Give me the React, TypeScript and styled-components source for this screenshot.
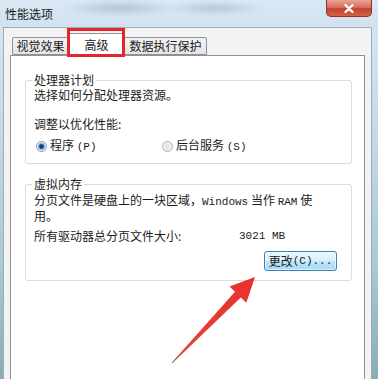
import React from 'react';
import styled, { createGlobalStyle } from 'styled-components';

const GlobalStyle = createGlobalStyle`
  html, body { margin: 0; padding: 0; background: #fff; }
  body { font-family: "Noto Sans CJK SC", "Noto Sans", sans-serif; }
`;

const Page = styled.div`
  position: relative;
  width: 378px;
  height: 379px;
  overflow: hidden;
  display: flex;
  flex-direction: column;
  background: linear-gradient(180deg, #d8e7f4 0%, #c7dbee 30%, #a9c8d8 70%, #86afb2 100%);
  font-family: "Noto Sans CJK SC", sans-serif;
  font-size: 12px;
  color: #1c1c1c;
`;

const TitleBar = styled.div`
  height: 27px;
  flex: none;
  display: flex;
  align-items: flex-start;
  background:
    radial-gradient(ellipse 55px 9px at 120px 8px, rgba(120, 135, 150, 0.35), transparent),
    radial-gradient(ellipse 50px 8px at 215px 8px, rgba(120, 135, 150, 0.3), transparent),
    linear-gradient(180deg, #dbe8f5, #d0e1f1);
`;

const Title = styled.div`
  margin: 6px 0 0 5px;
  font-size: 12px;
  line-height: 16px;
  color: #1b1b1b;
`;

const CloseButton = styled.div`
  margin-left: auto;
  margin-right: 6px;
  width: 46px;
  height: 17px;
  box-sizing: border-box;
  border: 1px solid #8f3225;
  border-top: none;
  border-radius: 0 0 5px 5px;
  background: linear-gradient(180deg, #e9a596 0%, #d8705d 45%, #c4432d 55%, #d0624c 100%);
  display: flex;
  align-items: center;
  justify-content: center;
`;

const Client = styled.div`
  flex: 1;
  margin: 0 6px 0 3px;
  border: 1px solid #a2acb6;
  border-bottom: none;
  background: #f3f3f3;
  display: flex;
  flex-direction: column;
  padding: 0 6px 0 6px;
`;

const TabStrip = styled.div`
  height: 28px;
  flex: none;
  display: flex;
  align-items: flex-end;
  padding-left: 2px;
  margin-bottom: -1px;
  position: relative;
  z-index: 1;
`;

const Tab = styled.div<{ $active?: boolean; $w: number }>`
  box-sizing: border-box;
  width: ${(p) => p.$w}px;
  height: ${(p) => (p.$active ? 23 : 18)}px;
  margin-bottom: ${(p) => (p.$active ? 0 : 1)}px;
  margin-left: -1px;
  &:first-child { margin-left: 0; }
  border: 1px solid #8e9199;
  border-bottom: ${(p) => (p.$active ? 'none' : '1px solid #8e9199')};
  border-radius: 2px 2px 0 0;
  background: ${(p) => (p.$active ? '#ffffff' : 'linear-gradient(180deg, #f4f4f4, #e4e4e4)')};
  display: flex;
  align-items: ${(p) => (p.$active ? 'flex-start' : 'center')};
  justify-content: center;
  padding-top: ${(p) => (p.$active ? 3 : 0)}px;
  font-size: 12px;
  line-height: 16px;
  color: #1a1a1a;
`;

const Panel = styled.div`
  flex: 1;
  background: #ffffff;
  border: 1px solid #8e9199;
  border-bottom: none;
  padding: 17px 12px 0 14px;
  display: flex;
  flex-direction: column;
`;

const Group = styled.fieldset<{ $gap?: number }>`
  margin: ${(p) => p.$gap ?? 0}px 0 0 0;
  padding: 0 8px 0 8px;
  border: 1px solid #d6dee4;
  border-radius: 3px;
  min-width: 0;
  display: flex;
  flex-direction: column;
`;

const Legend = styled.legend`
  padding: 0 2px;
  margin-left: -2px;
  font-size: 12px;
  line-height: 14px;
  color: #1c1c1c;
`;

const Line = styled.div<{ $top?: number; $lh?: number }>`
  margin-top: ${(p) => p.$top ?? 0}px;
  font-size: 12px;
  line-height: ${(p) => p.$lh ?? 14}px;
  white-space: nowrap;
`;

const Latin = styled.span`
  font-family: "Liberation Mono", "DejaVu Sans Mono", monospace;
  font-size: 11px;
`;

const RadioRow = styled.div`
  margin-top: 7px;
  margin-bottom: 11px;
  margin-left: 2px;
  display: grid;
  grid-template-columns: 126px auto;
  height: 14px;
  align-items: center;
`;

const RadioOption = styled.div`
  display: flex;
  align-items: center;
  gap: 3px;
  line-height: 14px;
`;

const RadioDot = styled.span<{ $checked?: boolean }>`
  width: 11px;
  height: 11px;
  box-sizing: border-box;
  border-radius: 50%;
  border: 1px solid ${(p) => (p.$checked ? '#7d9cb8' : '#a7b0b8')};
  background: ${(p) =>
    p.$checked
      ? 'radial-gradient(circle, #123f70 0 1.5px, #3f7fc0 2.5px, #bcd8f0 3.5px, #f2f6f9 4.5px)'
      : 'radial-gradient(circle, #e2e6ea 0 2px, #f4f5f6 4.5px)'};
  flex: none;
`;

const SizeRow = styled.div`
  margin-top: 7px;
  display: grid;
  grid-template-columns: 205px auto;
  line-height: 14px;
  white-space: nowrap;
`;

const ButtonRow = styled.div`
  display: flex;
  justify-content: flex-end;
  margin-top: 8px;
  margin-bottom: 9px;
  padding-right: 6px;
`;

const Button = styled.div`
  width: 73px;
  height: 20px;
  box-sizing: border-box;
  border: 1px solid #3c7fb1;
  border-radius: 3px;
  background: linear-gradient(180deg, #eaf6fd 0%, #d9f0fc 48%, #bee6fd 52%, #a7d9f5 100%);
  box-shadow: inset 0 0 0 1px rgba(255, 255, 255, 0.6);
  display: flex;
  align-items: center;
  justify-content: center;
  font-size: 12px;
  line-height: 14px;
  color: #1a1a1a;
`;

const Highlight = styled.div`
  position: absolute;
  z-index: 5;
  left: 67px;
  top: 28px;
  width: 58px;
  height: 29px;
  box-sizing: border-box;
  border: 3px solid #e2272b;
  pointer-events: none;
`;

const ArrowLayer = styled.svg`
  position: absolute;
  z-index: 5;
  left: 0;
  top: 0;
  width: 378px;
  height: 379px;
  pointer-events: none;
`;

export default function App() {
  return (
    <>
      <GlobalStyle />
      <Page>
        <TitleBar>
          <Title>性能选项</Title>
          <CloseButton>
            <svg width="10" height="9" viewBox="0 0 10 9">
              <path d="M1.5 1 L8.5 8 M8.5 1 L1.5 8" stroke="#ffffff" strokeWidth="2.2" strokeLinecap="round" />
            </svg>
          </CloseButton>
        </TitleBar>
        <Client>
          <TabStrip>
            <Tab $w={57}>视觉效果</Tab>
            <Tab $w={57} $active>高级</Tab>
            <Tab $w={83}>数据执行保护</Tab>
          </TabStrip>
          <Panel>
            <Group>
              <Legend>处理器计划</Legend>
              <Line $top={1}>选择如何分配处理器资源。</Line>
              <Line $top={15}>调整以优化性能:</Line>
              <RadioRow>
                <RadioOption>
                  <RadioDot $checked />
                  <span>程序 <Latin>(P)</Latin></span>
                </RadioOption>
                <RadioOption>
                  <RadioDot />
                  <span>后台服务 <Latin>(S)</Latin></span>
                </RadioOption>
              </RadioRow>
            </Group>
            <Group $gap={13}>
              <Legend>虚拟内存</Legend>
              <Line $top={2} $lh={13}>
                分页文件是硬盘上的一块区域，<Latin>Windows</Latin> 当作 <Latin>RAM</Latin> 使
              </Line>
              <Line $lh={13}>用。</Line>
              <SizeRow>
                <span>所有驱动器总分页文件大小:</span>
                <Latin>3021 MB</Latin>
              </SizeRow>
              <ButtonRow>
                <Button>
                  更改<Latin>(C)...</Latin>
                </Button>
              </ButtonRow>
            </Group>
          </Panel>
        </Client>
        <Highlight />
        <ArrowLayer viewBox="0 0 378 379">
          <defs>
            <linearGradient id="arrowFill" x1="172" y1="363" x2="255" y2="277" gradientUnits="userSpaceOnUse">
              <stop offset="0" stopColor="#8a6b6b" />
              <stop offset="0.12" stopColor="#e0453d" />
              <stop offset="1" stopColor="#ea2f2a" />
            </linearGradient>
          </defs>
          <polygon
            points="171.6,362.7 235,291.8 229.5,286.5 255,277 246.3,302.7 240.8,297.4 172.4,363.3"
            fill="url(#arrowFill)"
          />
        </ArrowLayer>
      </Page>
    </>
  );
}
